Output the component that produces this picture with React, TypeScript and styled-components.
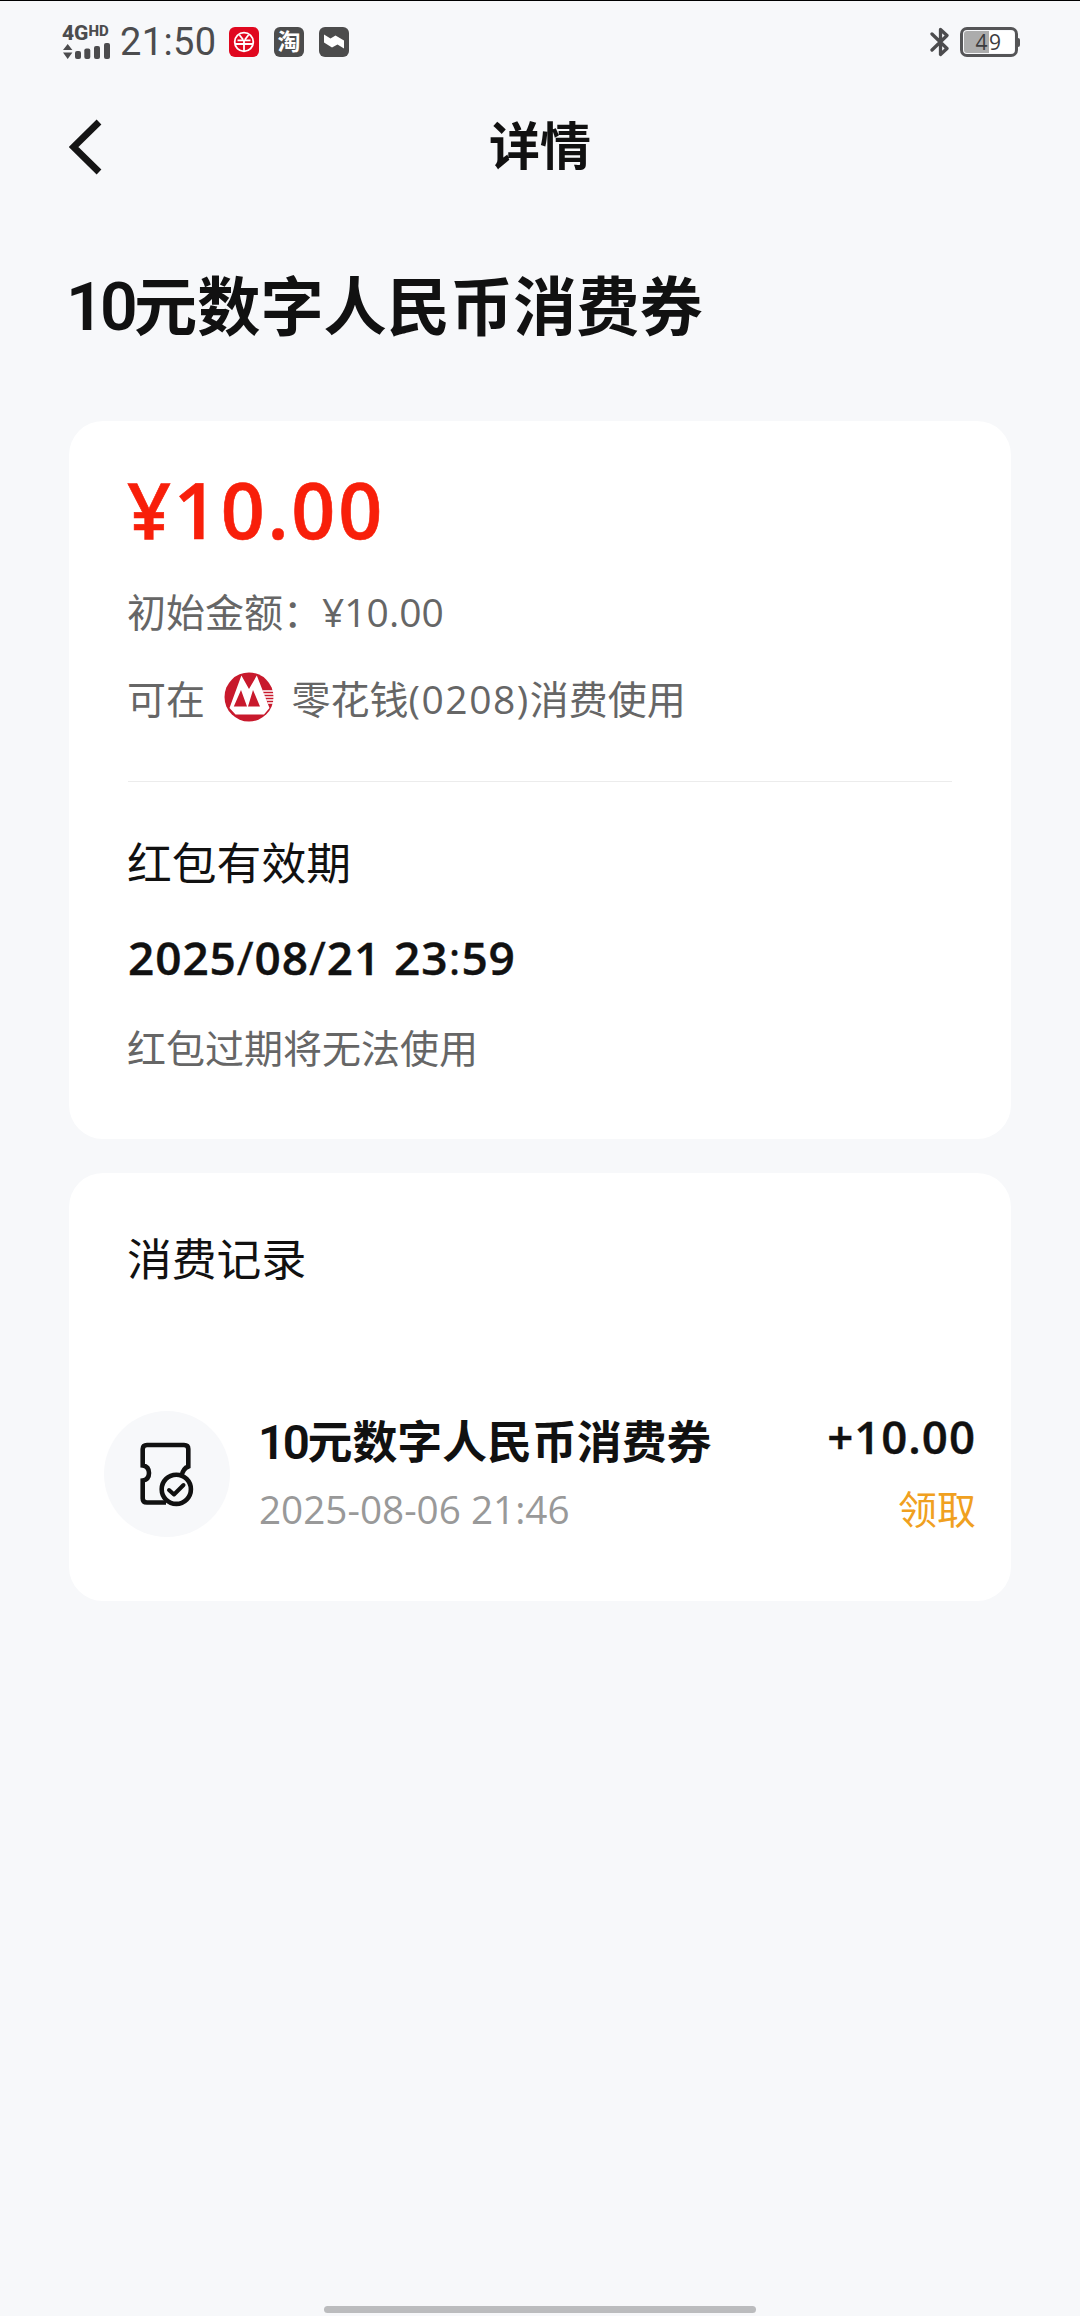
import React from 'react';
import styled, { createGlobalStyle } from 'styled-components';

const GlobalStyle = createGlobalStyle`
  * { box-sizing: border-box; }
  html, body { margin: 0; padding: 0; background: #f7f8fa; }
  body { font-family: 'Open Sans', 'Noto Sans CJK SC', sans-serif; color: #111; }
`;

const Screen = styled.div`
  width: 1080px;
  height: 2316px;
  display: flex;
  flex-direction: column;
  background: #f7f8fa;
  border-top: 1px solid #000;
  overflow: hidden;
`;

const StatusBar = styled.header`
  height: 83px;
  padding: 0 60px 0 62px;
  display: flex;
  justify-content: space-between;
  color: #4c4c4e;
`;

const StatusGroup = styled.div`
  display: flex;
  align-items: center;
  height: 82px;
`;

const Signal = styled.div`
  width: 48px;
  display: flex;
  flex-direction: column;
  gap: 1px;
`;

const Network = styled.div`
  font: 800 21px/17px Roboto, sans-serif;
  display: flex;
  align-items: flex-start;
  small { font-size: 15px; line-height: 12px; }
`;

const Clock = styled.div`
  font: 400 38px/44px Roboto, sans-serif;
  width: 97px;
  letter-spacing: 0.4px;
  margin-left: 10px;
  margin-right: 12px;
`;

const AppBadge = styled.div<{ $color: string }>`
  width: 30px;
  height: 30px;
  border-radius: 6px;
  background: ${p => p.$color};
  color: #fff;
  display: flex;
  align-items: center;
  justify-content: center;
  font: 700 23px/26px 'Noto Sans CJK SC', sans-serif;
  margin-right: 15px;
`;

const BadgeGlyph = styled.span`
  height: 30px;
`;

const Battery = styled.div`
  width: 58px;
  height: 30px;
  margin-left: 10px;
  border: 3px solid #555557;
  border-radius: 7px;
  padding: 1px;
  display: flex;
  background: linear-gradient(90deg, #acacac 0 25px, #fff 25px) content-box #fff;
  justify-content: center;
  font: 500 21px/22px 'Open Sans', sans-serif;
  letter-spacing: 1.4px;
  color: #3c3c3e;
`;

const BatteryTip = styled.div`
  width: 2px;
  height: 9px;
  background: #555557;
  border-radius: 0 2px 2px 0;
`;

const NavBar = styled.nav`
  height: 122px;
  padding: 3px 69px 0;
  display: grid;
  grid-template-columns: 60px 1fr 60px;
  align-items: center;
`;

const NavTitle = styled.h1`
  margin: -4px 0 0;
  text-align: center;
  font-size: 51px;
  line-height: 60px;
  font-weight: 700;
`;

const Main = styled.main`
  flex: 1;
  padding: 55px 69px 0;
`;

const CouponTitle = styled.h2`
  margin: 0 0 70px -3px;
  font-size: 63.2px;
  line-height: 90px;
  font-weight: 700;
  white-space: nowrap;
`;

const Digits = styled.span<{ $size: number; $spacing: number }>`
  font-family: Roboto, sans-serif;
  font-weight: 600;
  font-size: ${p => p.$size}px;
  letter-spacing: ${p => p.$spacing}px;
  line-height: 1px;
`;

const Card = styled.section<{ $height: number; $top: number }>`
  height: ${p => p.$height}px;
  padding: ${p => p.$top}px 0 0;
  border-radius: 34px;
  background: #fff;
  & + & { margin-top: 34px; }
`;

const Amount = styled.div`
  padding-left: 58px;
  font-size: 77px;
  line-height: 80px;
  font-weight: 600;
  letter-spacing: 2.8px;
  color: #f81f0a;
  -webkit-text-stroke: 0.6px #f81f0a;
`;

const Line = styled.div<{ $mt: number }>`
  height: 56px;
  margin: ${p => p.$mt}px 58px 0;
  display: flex;
  align-items: center;
  font-size: 39px;
  line-height: 56px;
  color: #666;
  white-space: pre;
`;

const CardTail = styled.span`
  letter-spacing: 1.5px;
`;

const LogoSlot = styled.span`
  display: flex;
  margin: -5px 18px 0 18.5px;
`;

const Divider = styled.hr`
  height: 1px;
  border: 0;
  margin: 54px 59px 51px;
  background: #ececec;
`;

const Label = styled.h3`
  margin: 0 58px;
  font-size: 44.8px;
  line-height: 60px;
  font-weight: 400;
  color: #111;
`;

const Expiry = styled.div`
  margin: 34px 58px 0;
  padding: 0 0 1px 1px;
  font-size: 46px;
  line-height: 60px;
  font-weight: 600;
  letter-spacing: 0.9px;
  -webkit-text-stroke: 0.4px #111;
`;

const Separator = styled.span`
  font-weight: 400;
`;

const RecordRow = styled.div`
  margin-top: 122px;
  padding: 0 35px;
  display: flex;
  height: 127px;
`;

const RecordIcon = styled.div`
  width: 126px;
  height: 126px;
  border-radius: 50%;
  background: #f7f8fa;
  display: flex;
  align-items: center;
  justify-content: center;
  padding-right: 3px;
  margin-right: 28px;
`;

const RecordBody = styled.div`
  flex: 1;
`;

const RecordTitle = styled.div`
  margin-top: 1px;
  font-size: 44.9px;
  line-height: 60px;
  height: 60px;
  font-weight: 700;
  white-space: nowrap;
`;

const RecordTime = styled.div`
  margin-top: 9px;
  padding-left: 1px;
  font-size: 38.7px;
  line-height: 56px;
  color: #999;
`;

const RecordSide = styled.div`
  text-align: right;
`;

const RecordAmount = styled.div`
  font-size: 45.6px;
  line-height: 51px;
  font-weight: 600;
  letter-spacing: 1px;
  -webkit-text-stroke: 0.4px #111;
`;

const RecordState = styled.div`
  margin-top: 19px;
  font-size: 39px;
  line-height: 56px;
  color: #f0a020;
`;

const HomeBar = styled.div`
  width: 432px;
  height: 7px;
  margin: 0 auto 3px;
  border-radius: 4px;
  background: #bbbcbe;
`;

const SignalBars = () => (
  <svg width="48" height="17" viewBox="0 0 48 17" fill="#4c4c4e">
    <path d="M1 7 L5.7 1 L10.4 7Z M1 9.5 L5.7 16 L10.4 9.5Z" />
    <rect x="13" y="8" width="6" height="8" rx="2" />
    <rect x="22.3" y="5.5" width="6" height="10.5" rx="2" />
    <rect x="32" y="3" width="6" height="13" rx="2" />
    <rect x="42" y="0" width="6" height="16" rx="2" />
  </svg>
);

const YuanIcon = () => (
  <svg width="22" height="22" viewBox="0 0 22 22" fill="none" stroke="#fff" strokeWidth="1.8">
    <circle cx="11" cy="11" r="9.3" />
    <path d="M6.5 4 L10 8.5 M15.5 4 L12 8.5 M4.5 9.3 H17.5 M2 13 H20 M11 9 V20" />
  </svg>
);

const FlagIcon = () => (
  <svg width="22" height="20" viewBox="0 0 22 20" fill="#fff">
    <path d="M1 2.5 L7.5 6.5 L12.5 3.5 L21 8.5 V16.5 L14.5 12.5 L9 15.5 L1 10.5Z" />
  </svg>
);

const BluetoothIcon = () => (
  <svg width="20" height="30" viewBox="0 0 20 30" fill="none" stroke="#4c4c4e" strokeWidth="3.3" strokeLinejoin="round" strokeLinecap="round">
    <path d="M2 7 L17 21.5 L10.5 27.5 V2.5 L17 8.5 L2 23" />
  </svg>
);

const BackIcon = () => (
  <svg width="34" height="56" viewBox="0 0 34 56" fill="none" stroke="#151515" strokeWidth="6.8">
    <path d="M30 3 L4.5 28 L30 53" />
  </svg>
);

const BankLogo = () => (
  <svg width="50" height="50" viewBox="0 0 50 50">
    <circle cx="25" cy="25" r="24.5" fill="#c8192c" />
    <path d="M17.4 3.5 L25 17 L32.8 3.5 L45.5 36 L40 42.5 H11.5 L5.5 36Z" fill="#fff" />
    <path d="M17 18 L23 34.5 H9.8Z M29 18 L36 34.5 H24Z" fill="#c8192c" />
    <path d="M38.5 19 H50 M39.8 22 H50 M41 25 H50 M42.2 28 H50 M43.5 31 H49" stroke="#fff" strokeWidth="1.3" />
  </svg>
);

const CouponIcon = () => (
  <svg width="56" height="66" viewBox="0 0 56 66" fill="none" stroke="#111" strokeWidth="4.6">
    <path d="M28 61.5 H9 Q4.7 61.5 4.7 57.5 V39.5 Q11 38.5 11 32 Q11 25.5 4.7 24.5 V8 Q4.7 4 9 4 H46 Q50.3 4 50.3 8 V25.5 Q45 27.5 43.5 35" />
    <circle cx="38.3" cy="48.3" r="14.6" />
    <path d="M31 49 L36 53.5 L45.5 44" strokeWidth="4" strokeLinecap="round" strokeLinejoin="round" />
  </svg>
);

export default function App() {
  return (
    <>
      <GlobalStyle />
      <Screen>
        <StatusBar>
          <StatusGroup>
            <Signal>
              <Network>4G<small>HD</small></Network>
              <SignalBars />
            </Signal>
            <Clock>21:50</Clock>
            <AppBadge $color="#e0081f"><YuanIcon /></AppBadge>
            <AppBadge $color="#4c4c4c"><BadgeGlyph>淘</BadgeGlyph></AppBadge>
            <AppBadge $color="#4c4c4c"><FlagIcon /></AppBadge>
          </StatusGroup>
          <StatusGroup>
            <BluetoothIcon />
            <Battery>49</Battery>
            <BatteryTip />
          </StatusGroup>
        </StatusBar>
        <NavBar>
          <BackIcon />
          <NavTitle>详情</NavTitle>
        </NavBar>
        <Main>
          <CouponTitle><Digits $size={66} $spacing={-3.7}>10</Digits>元数字人民币消费券</CouponTitle>
          <Card $height={718} $top={49}>
            <Amount>¥10.00</Amount>
            <Line $mt={34}>初始金额：¥10.00</Line>
            <Line $mt={31}>
              可在
              <LogoSlot><BankLogo /></LogoSlot>
              零花钱<CardTail>(0208)</CardTail>消费使用
            </Line>
            <Divider />
            <Label>红包有效期</Label>
            <Expiry>
              2025<Separator>/</Separator>08<Separator>/</Separator>21 23<Separator>:</Separator>59
            </Expiry>
            <Line $mt={32}>红包过期将无法使用</Line>
          </Card>
          <Card $height={428} $top={56}>
            <Label>消费记录</Label>
            <RecordRow>
              <RecordIcon><CouponIcon /></RecordIcon>
              <RecordBody>
                <RecordTitle><Digits $size={47.5} $spacing={-2.4}>10</Digits>元数字人民币消费券</RecordTitle>
                <RecordTime>2025-08-06 21:46</RecordTime>
              </RecordBody>
              <RecordSide>
                <RecordAmount>+10.00</RecordAmount>
                <RecordState>领取</RecordState>
              </RecordSide>
            </RecordRow>
          </Card>
        </Main>
        <HomeBar />
      </Screen>
    </>
  );
}
